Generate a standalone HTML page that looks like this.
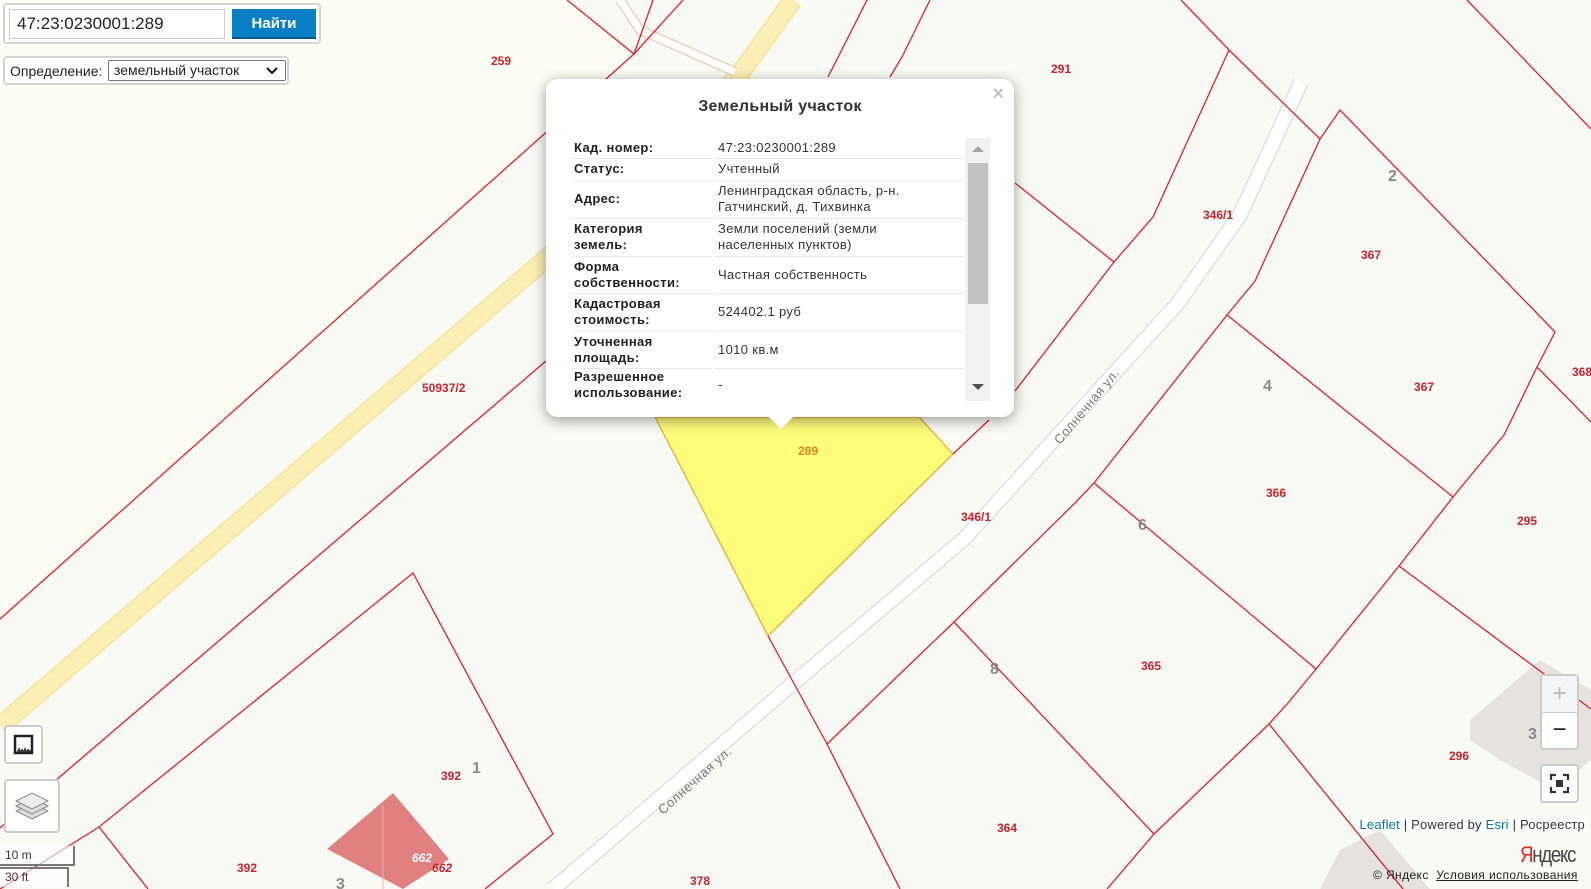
<!DOCTYPE html>
<html><head><meta charset="utf-8"><style>
*{box-sizing:border-box;margin:0;padding:0}
body{width:1591px;height:889px;overflow:hidden;position:relative;background:#fafaf5;font-family:"Liberation Sans",Arial,sans-serif}
#map{position:absolute;left:0;top:0}
.lbl{font:bold 12px "Liberation Sans",sans-serif;fill:#c8222d}
.g{font:bold 16px "Liberation Sans",sans-serif;fill:#8a8a8a}
.box{position:absolute;background:#fff;border:2px solid #d4d4d4;border-radius:4px}
.popup{position:absolute;left:546px;top:79px;width:468px;height:338px;background:#fff;border-radius:12px;box-shadow:0 3px 14px rgba(0,0,0,.4)}
.popup h3{position:absolute;left:0;right:0;top:19px;text-align:center;font-size:16px;color:#333;font-weight:bold;letter-spacing:.3px}
.x{position:absolute;right:10px;top:4px;font-size:20px;color:#c3c3c3;font-weight:bold}
table{position:absolute;left:26px;top:59px;width:392px;border-collapse:collapse;font-size:13px;color:#333;letter-spacing:.35px;table-layout:fixed}
td{border-bottom:1px solid #e8e8e8;line-height:16px;vertical-align:middle;padding:0 0 0 2px;white-space:nowrap;overflow:hidden}
td.k{font-weight:bold;color:#222;width:141px;border-right:2px solid #fff}
td.v{padding-left:4px}
.sb{position:absolute;left:419px;top:59px;width:25px;height:263px;background:#f1f1f1}
.th{position:absolute;left:3px;top:25px;width:20px;height:141px;background:#c1c1c1}
.ctl{position:absolute;background:#fff;border:2px solid rgba(0,0,0,.2);border-radius:4px}
</style></head><body>
<svg id="map" width="1591" height="889" viewBox="0 0 1591 889">
<polygon points="0,0 567,0 634,54 546,134 0,619" fill="#fefdf3"/>
<polyline points="0,726 546,259 736,79 793,0" fill="none" stroke="#f6e6a8" stroke-width="20"/>
<polyline points="0,726 546,259 736,79 793,0" fill="none" stroke="#fcefb4" stroke-width="16"/>
<polyline points="620,0 640,30 735,72" fill="none" stroke="#e8d3c0" stroke-width="10"/>
<polyline points="620,0 640,30 735,72" fill="none" stroke="#fff" stroke-width="7"/>
<polyline points="1301,82 1240,215 1178,303 964,539 790,686 553,889" fill="none" stroke="#e0e0e0" stroke-width="16"/>
<polyline points="1301,82 1240,215 1178,303 964,539 790,686 553,889" fill="none" stroke="#fff" stroke-width="13"/>
<polygon points="1470,720 1540,660 1591,690 1591,760 1555,790 1500,760 1470,740" fill="#e6e3de"/>
<polygon points="1340,850 1380,830 1430,889 1320,889" fill="#e6e3de"/>
<polygon points="655,417 919,417 953,454 768,636" fill="#fdfb7a" stroke="#f2a22a" stroke-width="1.2"/>
<g fill="none" stroke="#e21f26" stroke-width="1.3">
<polyline points="0,619 634,54"/><polyline points="567,0 634,54 653,0"/><polyline points="634,54 683,0"/>
<polyline points="546,361 0,828"/>
<polyline points="0,889 99,827 413,573 553,834 485,889"/>
<polyline points="99,827 148,889"/>
<polyline points="867,0 828,77"/><polyline points="930,0 902,57 890,77"/>
<polyline points="1181,0 1229,50 1320,139 1340,110 1555,332 1537,367 1504,435 1453,497 1399,566 1316,669 1288,703 1269,724 1154,834 1107,889"/>
<polyline points="1229,50 1153,217 1114,262 1015,391"/><polyline points="1015,183 1114,262"/>
<polyline points="989,420 953,454"/>
<polyline points="1320,139 1255,281 1227,315 1094,483 1076,502 954,622 827,744"/>
<polyline points="1227,315 1453,497"/><polyline points="1094,483 1316,669"/><polyline points="954,622 1154,834"/>
<polyline points="1399,566 1591,709"/><polyline points="1537,367 1591,422"/><polyline points="1269,724 1403,889"/>
<polyline points="1467,0 1591,129"/>
<polyline points="768,636 827,744 900,889"/>
</g>
<polygon points="393,793 449,859 403,889 327,849" fill="#e08080"/>
<line x1="383" y1="805" x2="383" y2="889" stroke="#f0b0b0"/>
<text class="lbl" x="491" y="65">259</text><text class="lbl" x="1051" y="73">291</text>
<text class="g" x="1388" y="181">2</text><text class="lbl" x="1203" y="219">346/1</text>
<text class="lbl" x="1361" y="259">367</text><text class="lbl" x="1572" y="376">368</text>
<text class="g" x="1263" y="391">4</text><text class="lbl" x="1414" y="391">367</text>
<text class="lbl" x="422" y="392">50937/2</text><text class="lbl" x="798" y="455" style="fill:#e0841c">289</text>
<text class="lbl" x="1266" y="497">366</text><text class="lbl" x="961" y="521">346/1</text>
<text class="lbl" x="1517" y="525">295</text><text class="g" x="1138" y="530">6</text>
<text class="g" x="990" y="674">8</text><text class="lbl" x="1141" y="670">365</text>
<text class="g" x="472" y="773">1</text><text class="lbl" x="441" y="780">392</text>
<text class="lbl" x="1449" y="760">296</text><text class="g" x="1528" y="739">3</text>
<text class="lbl" x="997" y="832">364</text><text class="lbl" x="237" y="872">392</text>
<text class="lbl" x="690" y="885">378</text><text class="g" x="336" y="889">3</text>
<text class="lbl" x="412" y="862" style="fill:#fff;font-style:italic">662</text>
<text class="lbl" x="432" y="872" style="fill:#c8222d;font-style:italic">662</text>
<text x="1060" y="445" transform="rotate(-50 1060 445)" style="font:13px 'Liberation Sans';fill:#777;letter-spacing:.5px">Солнечная ул.</text>
<text x="663" y="815" transform="rotate(-42 663 815)" style="font:13px 'Liberation Sans';fill:#777;letter-spacing:.5px">Солнечная ул.</text>
</svg>

<div class="box" style="left:3px;top:3px;width:318px;height:41px"></div>
<div style="position:absolute;left:9px;top:9px;width:216px;height:30px;border:1px solid #ccc;background:#fff;font-size:17px;padding:4px 7px;color:#222">47:23:0230001:289</div>
<div style="position:absolute;left:232px;top:9px;width:84px;height:30px;background:#0b7fc5;color:#fff;font-size:15px;font-weight:bold;text-align:center;line-height:30px;border-bottom:2px solid #075a8c">Найти</div>
<div class="box" style="left:3px;top:56px;width:286px;height:29px"></div>
<div style="position:absolute;left:10px;top:63px;font-size:14px;color:#222">Определение:</div>
<div style="position:absolute;left:108px;top:60px;width:178px;height:21px;border:1px solid #777;border-radius:2px;background:#fff;font-size:14px;padding:1px 5px;color:#222">земельный участок<svg style="position:absolute;right:7px;top:6px" width="12" height="8"><path d="M1 1L6 6L11 1" fill="none" stroke="#111" stroke-width="2"/></svg></div>

<div class="popup"><h3>Земельный участок</h3><div class="x">×</div>
<table>
<tr style="height:20px"><td class="k">Кад. номер:</td><td class="v">47:23:0230001:289</td></tr>
<tr style="height:22px"><td class="k">Статус:</td><td class="v">Учтенный</td></tr>
<tr style="height:38px"><td class="k">Адрес:</td><td class="v">Ленинградская область, р-н.<br>Гатчинский, д. Тихвинка</td></tr>
<tr style="height:38px"><td class="k">Категория<br>земель:</td><td class="v">Земли поселений (земли<br>населенных пунктов)</td></tr>
<tr style="height:37px"><td class="k">Форма<br>собственности:</td><td class="v">Частная собственность</td></tr>
<tr style="height:38px"><td class="k">Кадастровая<br>стоимость:</td><td class="v">524402.1 руб</td></tr>
<tr style="height:37px"><td class="k">Уточненная<br>площадь:</td><td class="v">1010 кв.м</td></tr>
<tr style="height:34px"><td class="k" style="border-bottom:0">Разрешенное<br>использование:</td><td class="v" style="border:0">-</td></tr>
</table>
<div class="sb"><div class="th"></div>
<div style="position:absolute;left:7px;top:8px;border:6px solid transparent;border-bottom:6px solid #a3a3a3;border-top:0"></div>
<div style="position:absolute;left:7px;top:246px;border:6px solid transparent;border-top:6px solid #505050;border-bottom:0"></div></div>
<div style="position:absolute;left:221px;top:336px;border:14px solid transparent;border-top:14px solid #fff;border-bottom:0"></div>
</div>

<div class="ctl" style="left:4px;top:725px;width:39px;height:39px"><svg width="35" height="35" viewBox="0 0 35 35"><rect x="9" y="9" width="17" height="17" fill="none" stroke="#222" stroke-width="2.5"/><path d="M11 24h14M13 21v3M16 22v2M19 21v3M22 22v2" stroke="#222" stroke-width="1.5"/></svg></div>
<div class="ctl" style="left:4px;top:779px;width:56px;height:54px">
<svg width="52" height="50" viewBox="0 0 52 50"><g stroke="#888" fill="#ddd"><path d="M10 30 L26 38 L42 30 L26 22Z"/><path d="M10 25 L26 33 L42 25 L26 17Z"/><path d="M10 20 L26 28 L42 20 L26 12Z" fill="#eee"/></g></svg></div>
<div style="position:absolute;left:0;top:846px;width:75px;height:20px;border:2px solid #777;border-top:none;border-left:none;background:rgba(255,255,255,.6);font-size:12px;padding:2px 5px;color:#333">10 m</div>
<div style="position:absolute;left:0;top:867px;width:69px;height:20px;border:2px solid #777;border-bottom:none;border-left:none;background:rgba(255,255,255,.6);font-size:12px;padding:1px 5px;color:#333">30 ft</div>

<div class="ctl" style="left:1540px;top:674px;width:39px;height:76px">
<div style="height:37px;border-bottom:1px solid #ccc;background:#f4f4f4;color:#bbb;font-size:24px;text-align:center;line-height:35px">+</div>
<div style="text-align:center;font-size:24px;line-height:33px;color:#222">−</div></div>
<div class="ctl" style="left:1540px;top:764px;width:39px;height:39px"><svg width="35" height="35" viewBox="0 0 35 35"><g fill="none" stroke="#333" stroke-width="2.2"><path d="M9 14V9h5M21 9h5v5M26 21v5h-5M14 26H9v-5"/></g><rect x="14" y="14" width="7" height="7" fill="#333"/></svg></div>
<div style="position:absolute;right:4px;top:817px;background:rgba(255,255,255,.7);font-size:13px;color:#333;padding:0 2px;letter-spacing:.2px"><span style="color:#0078a8">Leaflet</span> | Powered by <span style="color:#0078a8">Esri</span> | Росреестр</div>
<div style="position:absolute;left:1520px;top:843px;width:62px;font-size:22px;line-height:24px;color:#444;letter-spacing:-1.5px;transform:scaleX(.85);transform-origin:left"><span style="color:#e52620">Я</span>ндекс</div>
<div style="position:absolute;left:1373px;top:868px;font-size:12px;color:#222;letter-spacing:.4px">© Яндекс &nbsp;<u>Условия использования</u></div>
</body></html>
